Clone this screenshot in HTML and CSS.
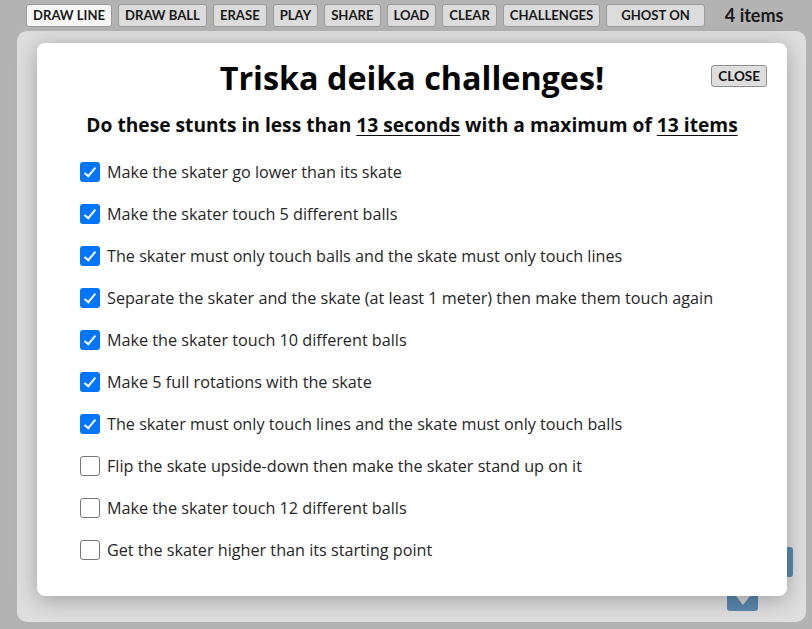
FILE: index.html
```html
<!DOCTYPE html>
<html>
<head>
<meta charset="utf-8">
<link rel="stylesheet" href="styles.css">
</head>
<body>
<div class="toolbar">
  <button class="tb active">DRAW LINE</button>
  <button class="tb">DRAW BALL</button>
  <button class="tb">ERASE</button>
  <button class="tb">PLAY</button>
  <button class="tb">SHARE</button>
  <button class="tb">LOAD</button>
  <button class="tb">CLEAR</button>
  <button class="tb">CHALLENGES</button>
  <button class="tb wide">GHOST ON</button>
  <span class="count">4 items</span>
</div>
<div class="panel">
  <div class="blue-bar"></div>
  <div class="blue-down"><svg width="14" height="10" viewBox="0 0 14 10"><path d="M0 0 L7 9 L14 0 Z" fill="#d6d6d6"/></svg></div>
  <div class="modal">
    <div class="head">
      <h1 class="title">Triska deika challenges!</h1>
      <button class="close">CLOSE</button>
    </div>
    <p class="sub">Do these stunts in less than <u>13 seconds</u> with a maximum of <u>13 items</u></p>
    <ul class="list">
      <li><span class="cb on"></span>Make the skater go lower than its skate</li>
      <li><span class="cb on"></span>Make the skater touch 5 different balls</li>
      <li><span class="cb on"></span>The skater must only touch balls and the skate must only touch lines</li>
      <li><span class="cb on"></span>Separate the skater and the skate (at least 1 meter) then make them touch again</li>
      <li><span class="cb on"></span>Make the skater touch 10 different balls</li>
      <li><span class="cb on"></span>Make 5 full rotations with the skate</li>
      <li><span class="cb on"></span>The skater must only touch lines and the skate must only touch balls</li>
      <li><span class="cb"></span>Flip the skate upside-down then make the skater stand up on it</li>
      <li><span class="cb"></span>Make the skater touch 12 different balls</li>
      <li><span class="cb"></span>Get the skater higher than its starting point</li>
    </ul>
  </div>
</div>
</body>
</html>
```
FILE: styles.css
```css
html, body {
  margin: 0;
  padding: 0;
}
body {
  width: 812px;
  height: 629px;
  overflow: hidden;
  background: #b3b3b3;
  font-family: "Open Sans", "Noto Sans", sans-serif;
}
.toolbar {
  display: flex;
  align-items: center;
  gap: 6px;
  padding: 3px 0 0 26px;
  height: 24px;
}
.tb {
  height: 23px;
  padding: 0 6px;
  border: 1px solid #9a9a9a;
  border-radius: 3px;
  background: #dcdcdc;
  font-family: "Lato", "Open Sans", sans-serif;
  font-weight: 700;
  font-size: 13.1px;
  color: #1a1a1a;
}
.tb.active {
  background: #f7f7f7;
}
.tb.wide {
  padding: 0 14px;
}
.count {
  margin-left: 14px;
  font-family: "Lato", "Open Sans", sans-serif;
  font-weight: 700;
  font-size: 18px;
  color: #1a1a1a;
}
.panel {
  position: relative;
  margin: 4px 0 0 17px;
  width: 789px;
  height: 591px;
  box-sizing: border-box;
  padding: 12px 19px 0 20px;
  border-radius: 10px;
  background: #dedede;
}
.blue-bar {
  position: absolute;
  left: 767px;
  top: 516px;
  width: 9px;
  height: 30px;
  border-radius: 3px;
  background: #5b87ad;
}
.blue-down {
  position: absolute;
  left: 710px;
  top: 548px;
  width: 31px;
  height: 32px;
  box-sizing: border-box;
  padding-top: 17px;
  border-radius: 3px;
  background: #5b87ad;
  display: flex;
  align-items: flex-start;
  justify-content: center;
}
.blue-down svg {
  display: block;
}
.modal {
  position: relative;
  width: 750px;
  height: 553px;
  box-sizing: border-box;
  background: #ffffff;
  border-radius: 8px;
  box-shadow: 0 4px 22px rgba(0, 0, 0, 0.28);
  padding: 12px 20px 0 43px;
}
.head {
  position: relative;
  display: flex;
  justify-content: center;
  padding-right: 23px;
}
.title {
  margin: 0;
  font-family: "Open Sans", "Noto Sans", sans-serif;
  font-weight: 700;
  font-size: 32.3px;
  line-height: 44px;
  color: #050505;
}
.close {
  position: absolute;
  right: 0;
  top: 10px;
  height: 22px;
  padding: 0 6px;
  border: 1px solid #8f8f8f;
  border-radius: 3px;
  background: #dedede;
  font-family: "Lato", "Open Sans", sans-serif;
  font-weight: 700;
  font-size: 13.5px;
  color: #111;
}
.sub {
  margin: 14px 0 0 0;
  padding-right: 23px;
  text-align: center;
  font-family: "Open Sans", "Noto Sans", sans-serif;
  font-weight: 700;
  font-size: 19.2px;
  line-height: 24px;
  color: #0d0d0d;
}
.sub u {
  text-underline-offset: 3px;
}
.list {
  list-style: none;
  margin: 14px 0 0 0;
  padding: 0;
}
.list li {
  display: flex;
  align-items: center;
  height: 42px;
  font-size: 16.2px;
  color: #262626;
}
.cb {
  width: 20px;
  height: 20px;
  box-sizing: border-box;
  border: 1px solid #767676;
  border-radius: 3px;
  background: #fff;
  margin-right: 7px;
  flex: none;
  position: relative;
}
.cb.on {
  border: none;
  background: #0075ff;
}
.cb.on::after {
  content: "";
  position: absolute;
  left: 7px;
  top: 3px;
  width: 4px;
  height: 10px;
  border: solid #fff;
  border-width: 0 2.5px 2.5px 0;
  transform: rotate(40deg);
}
```
